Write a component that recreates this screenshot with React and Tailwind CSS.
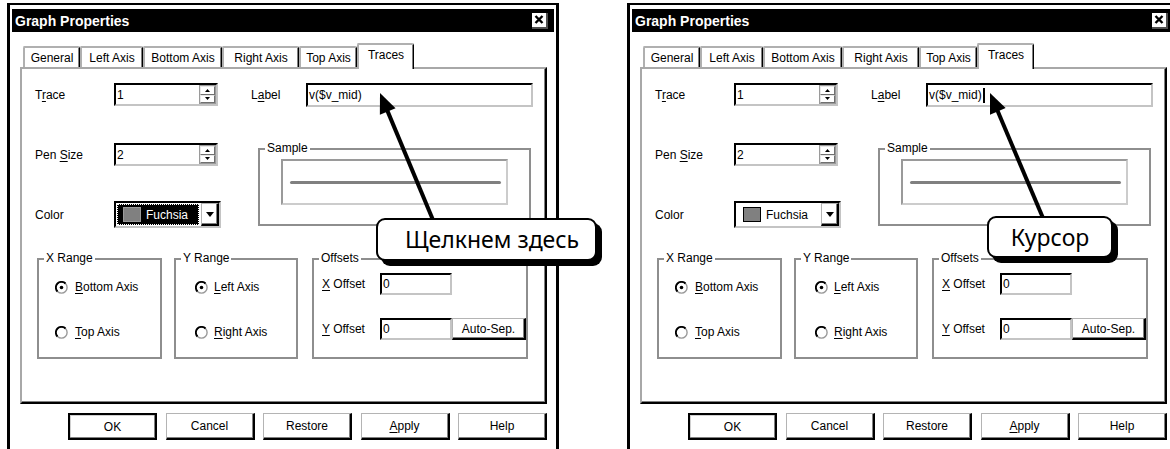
import React from "react";

const SUNKEN =
  "border-2 border-t-black border-l-black border-r-[#c4c4c4] border-b-[#c4c4c4] bg-white";
const RAISED =
  "border-t border-l border-t-[#b4b4b4] border-l-[#b4b4b4] border-r-2 border-b-2 border-r-black border-b-black shadow-[inset_-1px_-1px_0_#808080] bg-white";

function U({ children }) {
  return <span className="underline decoration-1 underline-offset-[2px]">{children}</span>;
}

function SpinBtn({ up }) {
  return (
    <div className="flex-1 flex items-center justify-center border-t border-l border-t-[#e8e8e8] border-l-[#e8e8e8] border-r border-b border-r-[#707070] border-b-[#707070] bg-white">
      <svg width="5" height="3" viewBox="0 0 5 3">
        {up ? <path d="M0 3 L2.5 0 L5 3Z" fill="#000" /> : <path d="M0 0 L2.5 3 L5 0Z" fill="#000" />}
      </svg>
    </div>
  );
}

function SpinBox({ value }) {
  return (
    <div className={"w-[104px] h-[23px] flex " + SUNKEN}>
      <div className="flex-1 flex items-center pl-[1px] text-[12px] leading-none">{value}</div>
      <div className="w-[17px] flex flex-col border border-[#9a9a9a]">
        <SpinBtn up />
        <SpinBtn />
      </div>
    </div>
  );
}

function Radio({ checked, children, gap }) {
  return (
    <div className={"h-[16px] flex items-center " + gap}>
      <svg width="13" height="13" viewBox="0 0 13 13">
        <circle cx="6.5" cy="6.5" r="5.6" fill="#fff" stroke="#9a9a9a" strokeWidth="1.4" />
        <path d="M2.5 10.5 A5.6 5.6 0 0 1 10.5 2.5" fill="none" stroke="#000" strokeWidth="1.8" />
        {checked && <circle cx="6.5" cy="6.5" r="1.8" fill="#000" />}
      </svg>
      <span className="text-[12px] leading-none">{children}</span>
    </div>
  );
}

function Group({ title, className, children }) {
  return (
    <div className={"relative border-2 border-[#8e8e8e] " + className}>
      <span className="absolute -top-[9px] left-[5px] px-[2px] bg-white text-[12px] leading-[14px]">
        {title}
      </span>
      {children}
    </div>
  );
}

function Tab({ label, w }) {
  return (
    <div
      className={
        "h-[21px] mb-[2px] flex items-center justify-center text-[12px] leading-none bg-white border-t-2 border-l-2 border-t-[#b0b0b0] border-l-[#b0b0b0] border-r border-r-black shadow-[inset_-1px_0_0_#808080] rounded-t-[2px] " +
        w
      }
    >
      {label}
    </div>
  );
}

function Button({ children, def }) {
  return (
    <div
      className={
        def
          ? "w-[89px] h-[27px] flex items-center justify-center text-[12px] border-2 border-black shadow-[inset_-1px_-1px_0_#808080,inset_1px_1px_0_#d0d0d0] bg-white"
          : "w-[89px] h-[27px] flex items-center justify-center text-[12px] " + RAISED
      }
    >
      {children}
    </div>
  );
}

function Arrow({ tip, tail }) {
  const dx = tip[0] - tail[0];
  const dy = tip[1] - tail[1];
  const len = Math.sqrt(dx * dx + dy * dy);
  const ux = dx / len;
  const uy = dy / len;
  const hl = 20;
  const hw = 8.5;
  const bx = tip[0] - hl * ux;
  const by = tip[1] - hl * uy;
  const px = -uy * hw;
  const py = ux * hw;
  return (
    <svg className="absolute left-0 top-0 pointer-events-none overflow-visible" width="600" height="300">
      <line x1={tail[0]} y1={tail[1]} x2={bx + ux * 2} y2={by + uy * 2} stroke="#000" strokeWidth="4" />
      <polygon points={`${tip[0]},${tip[1]} ${bx + px},${by + py} ${bx - px},${by - py}`} fill="#000" />
    </svg>
  );
}

function Dialog({ right }) {
  return (
    <div className="relative w-[552px] h-[470px] shrink-0 border-l-[3px] border-r-[3px] border-t-2 border-black bg-white">
      {/* title bar */}
      <div className="mx-[2px] mt-[4px] h-[23px] bg-black flex items-center pl-[3px]">
        <span className="text-white font-bold text-[14px] leading-none">Graph Properties</span>
        <div className="ml-auto mr-[6px] w-[16px] h-[16px] bg-white border-r-2 border-b-2 border-r-[#505050] border-b-[#505050] flex items-center justify-center">
          <svg width="10" height="9" viewBox="0 0 10 9">
            <path d="M1.5 1 L8.5 8 M8.5 1 L1.5 8" stroke="#000" strokeWidth="2.4" />
          </svg>
        </div>
      </div>

      {/* tabs */}
      <div className="relative z-10 ml-[13px] mt-[11px] h-[26px] -mb-[2px] flex items-end">
        <Tab label="General" w="w-[57px]" />
        <Tab label="Left Axis" w="w-[63px]" />
        <Tab label="Bottom Axis" w="w-[79px]" />
        <Tab label="Right Axis" w="w-[77px]" />
        <Tab label="Top Axis" w="w-[58px]" />
        <div className="h-[26px] w-[57px] pb-[4px] flex items-center justify-center text-[12px] leading-none bg-white border-t-2 border-l-2 border-t-[#b0b0b0] border-l-[#b0b0b0] border-r border-r-black shadow-[inset_-1px_0_0_#808080] rounded-t-[2px]">
          Traces
        </div>
      </div>

      {/* panel */}
      <div className="ml-[10px] w-[527px] h-[337px] border-2 border-t-[#a8a8a8] border-l-[#a8a8a8] border-r-black border-b-black shadow-[inset_-1px_-1px_0_#808080] bg-white">
        <div className="flex">
          {/* left column */}
          <div className="pl-[13px] flex flex-col">
            <div className="mt-[14px] h-[23px] flex items-center">
              <span className="w-[79px] text-[12px] leading-none">
                T<U>r</U>ace
              </span>
              <SpinBox value="1" />
            </div>
            <div className="mt-[37px] h-[23px] flex items-center">
              <span className="w-[79px] text-[12px] leading-none">
                Pen <U>S</U>ize
              </span>
              <SpinBox value="2" />
            </div>
            <div className="mt-[35px] h-[27px] flex items-center">
              <span className="w-[79px] text-[12px] leading-none">Color</span>
              <div className={"w-[107px] h-[27px] flex items-center " + SUNKEN}>
                {right ? (
                  <div className="ml-[1px] h-[21px] w-[82px] flex items-center">
                    <span className="ml-[6px] w-[18px] h-[15px] bg-[#808080] border border-black" />
                    <span className="ml-[5px] text-[12px] leading-none">Fuchsia</span>
                  </div>
                ) : (
                  <div className="ml-[1px] h-[21px] w-[82px] bg-black border border-dotted border-white flex items-center">
                    <span className="ml-[5px] w-[18px] h-[15px] bg-[#808080] border border-[#9a9a9a]" />
                    <span className="ml-[5px] text-[12px] leading-none text-white">Fuchsia</span>
                  </div>
                )}
                <div className={"ml-auto w-[18px] h-[23px] flex items-center justify-center " + RAISED}>
                  <svg width="8" height="5" viewBox="0 0 8 5">
                    <path d="M0 0 L4 5 L8 0Z" fill="#000" />
                  </svg>
                </div>
              </div>
            </div>
          </div>

          {/* right column */}
          <div className="ml-[30px] flex flex-col">
            <div className="mt-[14px] h-[24px] flex items-center">
              <span className="w-[55px] text-[12px] leading-none">
                L<U>a</U>bel
              </span>
              <div className={"w-[227px] h-[24px] flex items-center pl-[1px] text-[12px] leading-none " + SUNKEN}>
                v($v_mid)
                {right && <span className="ml-[1px] w-[2px] h-[15px] bg-black" />}
              </div>
            </div>
            <Group title="Sample" className="ml-[7px] mt-[41px] w-[273px] h-[78px]">
              <div className="ml-[21px] mt-[9px] w-[227px] h-[46px] border-2 border-t-[#9a9a9a] border-l-[#9a9a9a] border-r-[#cccccc] border-b-[#cccccc]">
                <div className="ml-[7px] mt-[20px] w-[211px] h-[3px] rounded-full bg-[#808080]" />
              </div>
            </Group>
          </div>
        </div>

        {/* groups row */}
        <div className="mt-[30px] flex">
          <Group title="X Range" className="ml-[15px] w-[125px] h-[101px]">
            <div className="pl-[16px] pt-[19px] flex flex-col">
              <Radio checked gap="gap-[7px]">
                <U>B</U>ottom Axis
              </Radio>
              <div className="mt-[29px]">
                <Radio gap="gap-[7px]">
                  <U>T</U>op Axis
                </Radio>
              </div>
            </div>
          </Group>
          <Group title="Y Range" className="ml-[12px] w-[124px] h-[101px]">
            <div className="pl-[19px] pt-[19px] flex flex-col">
              <Radio checked gap="gap-[6px]">
                <U>L</U>eft Axis
              </Radio>
              <div className="mt-[29px]">
                <Radio gap="gap-[6px]">
                  <U>R</U>ight Axis
                </Radio>
              </div>
            </div>
          </Group>
          <Group title="Offsets" className="ml-[14px] w-[216px] h-[101px]">
            <div className="pl-[8px] pt-[13px] flex flex-col">
              <div className="h-[22px] flex items-center">
                <span className="w-[58px] text-[12px] leading-none">
                  <U>X</U> Offset
                </span>
                <div className={"w-[72px] h-[22px] flex items-center pl-[1px] text-[12px] leading-none " + SUNKEN}>0</div>
              </div>
              <div className="mt-[23px] h-[22px] flex items-center">
                <span className="w-[58px] text-[12px] leading-none">
                  <U>Y</U> Offset
                </span>
                <div className={"w-[72px] h-[22px] flex items-center pl-[1px] text-[12px] leading-none " + SUNKEN}>0</div>
                <div className={"w-[74px] h-[22px] flex items-center justify-center text-[12px] leading-none " + RAISED}>
                  Auto-Sep.
                </div>
              </div>
            </div>
          </Group>
        </div>
      </div>

      {/* buttons */}
      <div className="mt-[9px] ml-[58px] flex gap-[8.5px]">
        <Button def>OK</Button>
        <Button>Cancel</Button>
        <Button>Restore</Button>
        <Button>
          <U>A</U>pply
        </Button>
        <Button>Help</Button>
      </div>

      {/* annotation overlay */}
      {right ? (
        <>
          <Arrow tip={[360, 88]} tail={[413, 213]} />
          <div className="absolute left-[357px] top-[211px] w-[126px] h-[42px] border-2 border-black rounded-[9px] bg-white shadow-[5px_5px_0_#000] flex items-center justify-center font-['Noto_Sans',sans-serif] text-[23px] leading-none">
            Курсор
          </div>
        </>
      ) : (
        <>
          <Arrow tip={[370, 88]} tail={[423, 215]} />
          <div className="absolute left-[366px] top-[213px] w-[221px] h-[43px] border-2 border-black rounded-[9px] bg-white shadow-[5px_5px_0_#000] flex items-center pl-[27px] font-['Noto_Sans',sans-serif] text-[23px] leading-none">
            Щелкнем здесь
          </div>
        </>
      )}
    </div>
  );
}

export default function App() {
  return (
    <div className="w-[1170px] h-[449px] overflow-hidden bg-white flex pl-[7px] pt-[3px] gap-[68px] font-['Liberation_Sans',Arial,sans-serif] text-black">
      <Dialog />
      <Dialog right />
    </div>
  );
}
